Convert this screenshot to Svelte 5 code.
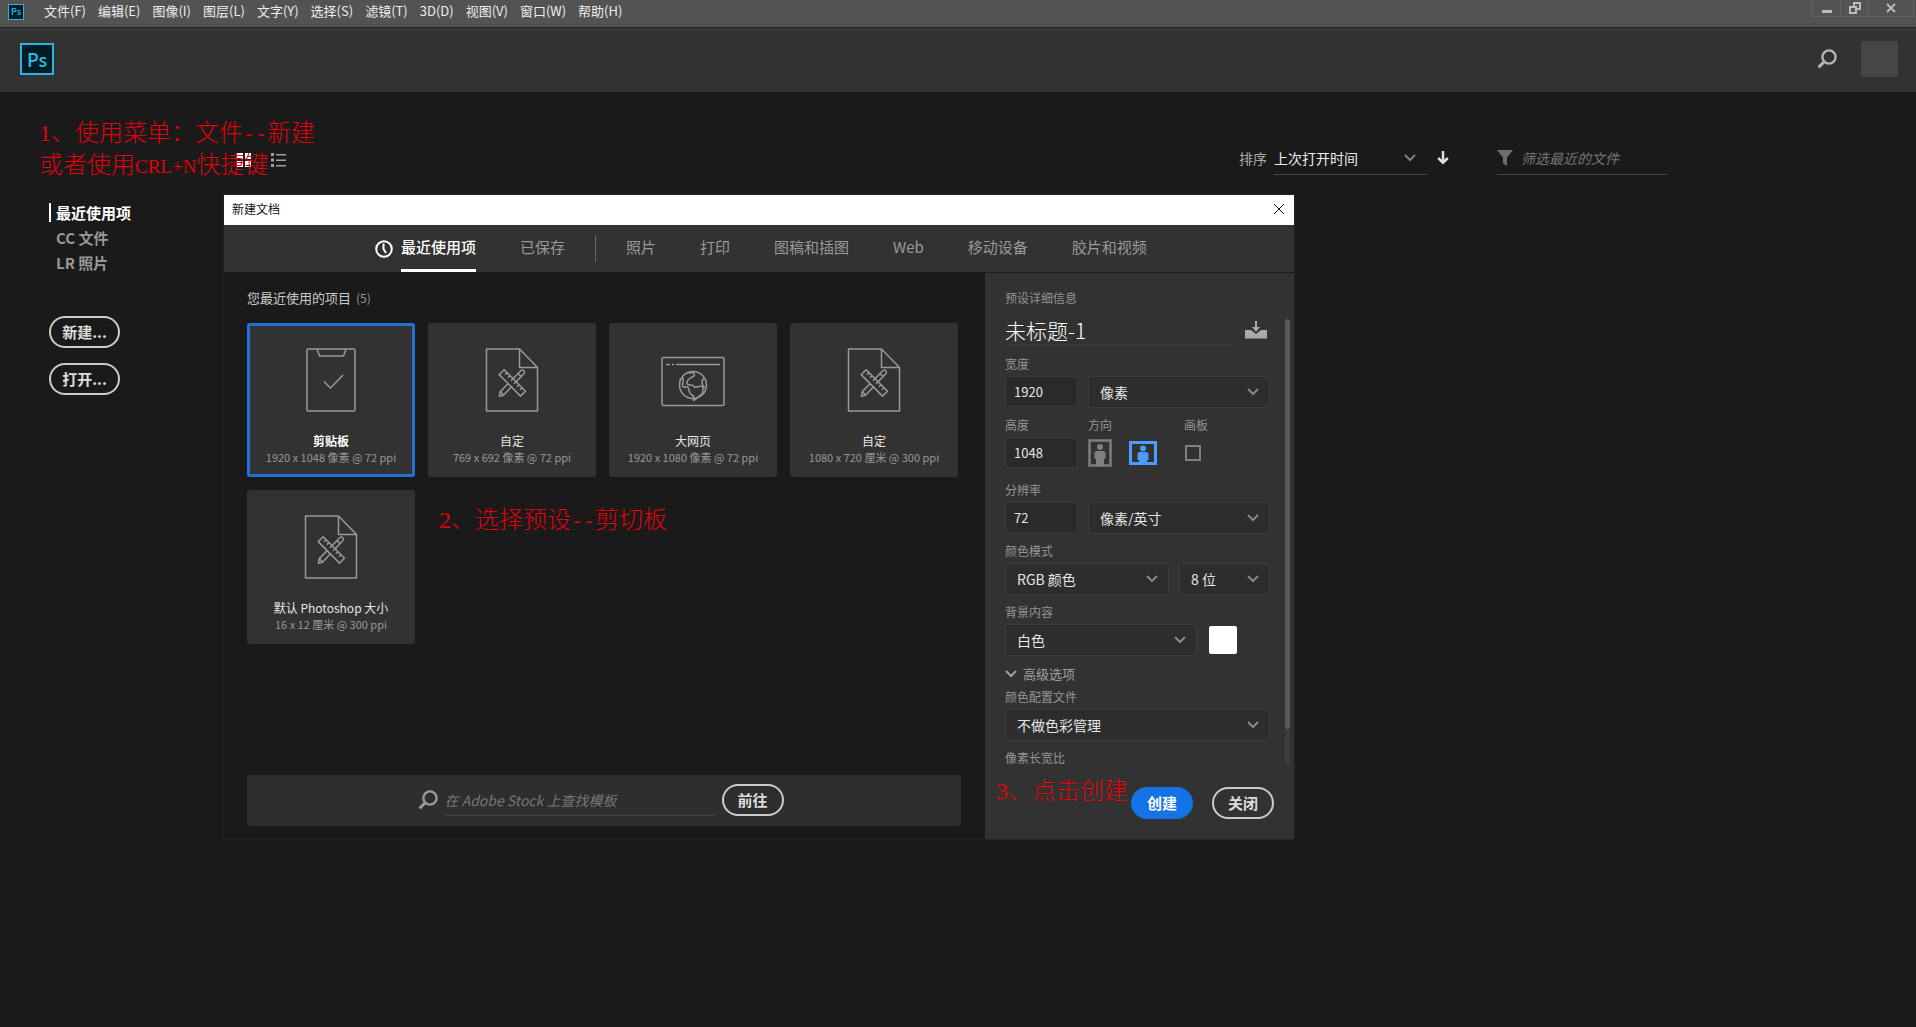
<script>
  let docName = $state('未标题-1');
  let selected = $state(0);
  let artboard = $state(false);
  let orientation = $state('landscape');

  const menus = ['文件(F)', '编辑(E)', '图像(I)', '图层(L)', '文字(Y)', '选择(S)', '滤镜(T)', '3D(D)', '视图(V)', '窗口(W)', '帮助(H)'];
  const tabs = ['照片', '打印', '图稿和插图', 'Web', '移动设备', '胶片和视频'];
  const presets = [
    { icon: 'clip', name: '剪贴板', size: '1920 x 1048 像素 @ 72 ppi' },
    { icon: 'doc', name: '自定', size: '769 x 692 像素 @ 72 ppi' },
    { icon: 'web', name: '大网页', size: '1920 x 1080 像素 @ 72 ppi' },
    { icon: 'doc', name: '自定', size: '1080 x 720 厘米 @ 300 ppi' },
    { icon: 'doc', name: '默认 Photoshop 大小', size: '16 x 12 厘米 @ 300 ppi' }
  ];
</script>

{#snippet magnifier()}
  <svg class="magnifier" viewBox="0 0 20 20" width="20" height="20" fill="none" stroke="currentColor">
    <circle cx="12" cy="8" r="6.600" stroke-width="2.400" />
    <path d="M7.200 12.800 1.600 18.400" stroke-width="3" />
  </svg>
{/snippet}

{#snippet pick(id, label, option, size)}
  <span class="pick {size}">
    <select {id} aria-label={label}><option>{option}</option></select>
    <svg viewBox="0 0 12 8" width="12" height="8" fill="none" stroke="currentColor" stroke-width="2"><path d="M1 1l5 5 5-5" /></svg>
  </span>
{/snippet}

<div class="app">
  <nav class="menubar">
    <span class="ps small">Ps</span>
    <div class="menus">
      {#each menus as m}<button>{m}</button>{/each}
    </div>
    <div class="window-controls">
      <button aria-label="最小化"><svg viewBox="0 0 12 12" width="12" height="12"><path d="M1 8h10v3H1z" fill="currentColor" /></svg></button>
      <button aria-label="还原"><svg viewBox="0 0 12 12" width="12" height="12" fill="none" stroke="currentColor" stroke-width="2"><path d="M1 5h6v6H1zM5 4V1h6v6H8" /></svg></button>
      <button class="wide" aria-label="关闭"><svg viewBox="0 0 12 12" width="12" height="12" fill="none" stroke="currentColor" stroke-width="2"><path d="M2 2l8 8M10 2l-8 8" /></svg></button>
    </div>
  </nav>

  <header class="topbar">
    <span class="ps">Ps</span>
    <button class="search" aria-label="搜索">{@render magnifier()}</button>
    <span class="avatar"></span>
  </header>

  <div class="workspace">
    <aside>
      <ul>
        <li><a class="current" href="#recent">最近使用项</a></li>
        <li><a href="#cc">CC 文件</a></li>
        <li><a href="#lr">LR 照片</a></li>
      </ul>
      <button class="pill">新建...</button>
      <button class="pill">打开...</button>
    </aside>

    <main>
      <div class="toolbar">
        <button class="view on" aria-label="网格视图">
          <svg viewBox="0 0 15 15" width="15" height="15" fill="currentColor"><path d="M0 0h6v6H0zM8 0h6v6H8zM0 8h6v6H0zM8 8h6v6H8z" /></svg>
        </button>
        <button class="view" aria-label="列表视图">
          <svg viewBox="0 0 15 15" width="15" height="15" fill="currentColor"><path d="M0 0h3v3H0zM0 5.500h3v3H0zM0 11h3v3H0zM5 1h10v1.500H5zM5 6.500h10V8H5zM5 12h10v1.500H5z" /></svg>
        </button>
        <label class="sort-label" for="sort">排序</label>
        <span class="sort">
          <select id="sort"><option>上次打开时间</option></select>
          <svg viewBox="0 0 12 8" width="12" height="8" fill="none" stroke="currentColor" stroke-width="2"><path d="M1 1l5 5 5-5" /></svg>
        </span>
        <button class="direction" aria-label="降序">
          <svg viewBox="0 0 12 14" width="12" height="14" fill="none" stroke="currentColor" stroke-width="2.500"><path d="M6 0v11M1.200 7 6 11.800 10.800 7" /></svg>
        </button>
        <div class="filter">
          <svg viewBox="0 0 16 16" width="16" height="16" fill="currentColor"><path d="M0 0h16L10 7.500V16L6 13.500v-6z" /></svg>
          <input aria-label="筛选" placeholder="筛选最近的文件" />
        </div>
      </div>

      <section class="dialog" role="dialog" aria-label="新建文档">
        <div class="titlebar">
          <h1>新建文档</h1>
          <button aria-label="关闭对话框"><svg viewBox="0 0 12 12" width="12" height="12" fill="none" stroke="currentColor"><path d="M1 1l10 10M11 1 1 11" /></svg></button>
        </div>

        <div class="tabs">
          <svg class="clock" viewBox="0 0 18 18" width="18" height="18" fill="none" stroke="currentColor" stroke-width="2"><circle cx="9" cy="9" r="7.800" /><path d="M8.500 3.500V9l2.500 4" /></svg>
          <button class="active">最近使用项</button>
          <button>已保存</button>
          <span class="rule"></span>
          {#each tabs as t}<button>{t}</button>{/each}
        </div>

        <div class="body">
          <div class="presets">
            <h2>您最近使用的项目 <span>(5)</span></h2>
            <div class="grid">
              {#each presets as p, i}
                <button class="card" class:chosen={selected === i} onclick={() => (selected = i)}>
                  <svg viewBox="0 0 64 64" width="64" height="64" fill="none" stroke="currentColor" stroke-width="1.500" stroke-linejoin="round">
                    {#if p.icon === 'clip'}
                      <rect x="8" y="1" width="48" height="62" rx="1" />
                      <path d="M18 1l2.500 7h24L47 1M25 33.500l6.500 6.500L44 27" />
                    {:else if p.icon === 'doc'}
                      <path d="M6.500 1h33l18 18.500V63h-51zM39.500 1v18.500h18" />
                      <path d="M23.500 47.200l-4.200 1 1-4.600L41 22.500q1.500-1 2.800.200t.2 2.800zM38 25.500l3 3M20.300 43.600l3.200 3.600" />
                      <path d="M24.200 21.700l21.300 21.600-5 4.800-21.300-21.500z" fill="#323232" />
                      <path d="M27 24.600l-2 2M30 27.600l-2 2M33 30.700l-2 2M36 33.700l-2 2M39 36.800l-2 2M42 39.800l-2 2" />
                    {:else}
                      <rect x="1" y="9.500" width="62" height="48" rx="1.500" />
                      <path d="M5 16.500h4M11 16.500h2M15 16.500h44" />
                      <circle cx="32" cy="37" r="13.500" />
                      <path d="M26.500 25q5-1 6.500.500t-1 3-4 2.500-2 3.500 3 2.500 4 1.500 5 0 4 3-1.500 5-5 4-3 .500-1.500-4-3-5-4-3-2-5-3.500-2M43.500 30q-2.500 1-2.500 4.500t3 5.500" />
                    {/if}
                  </svg>
                  <strong>{p.name}</strong>
                  <small>{p.size}</small>
                </button>
              {/each}
            </div>
            <form class="stock" onsubmit={(e) => e.preventDefault()}>
              {@render magnifier()}
              <input aria-label="查找模板" placeholder="在 Adobe Stock 上查找模板" />
              <button class="pill">前往</button>
            </form>
          </div>

          <div class="details">
            <div class="scroll">
              <div class="fields">
                <span class="caption">预设详细信息</span>
                <div class="row name">
                  <input aria-label="文档名称" bind:value={docName} />
                  <button aria-label="保存预设">
                    <svg viewBox="0 0 22 18" width="22" height="18" fill="currentColor"><path d="M0 9h6l5 4 5-4h6v8.500H0z" /><path d="M10 0h2v6h3l-4 5-4-5h3z" /></svg>
                  </button>
                </div>
                <label for="w">宽度</label>
                <div class="row">
                  <input id="w" class="num" value="1920" />
                  {@render pick('unit', '单位', '像素', '')}
                </div>
                <div class="row labels"><label for="h">高度</label><span class="orient-label">方向</span><label for="ab">画板</label></div>
                <div class="row">
                  <input id="h" class="num" value="1048" />
                  <div class="orient">
                    <button class:on={orientation === 'portrait'} aria-label="纵向" onclick={() => (orientation = 'portrait')}>
                      <svg viewBox="0 0 24 28" width="24" height="28" fill="currentColor"><path d="M1.500 1.500h21v25h-21z" fill="none" stroke="currentColor" stroke-width="2.400" /><circle cx="12" cy="8" r="3" /><path d="M6.500 14q0-2 2-2h7q2 0 2 2v6h-1.500v6H8v-6H6.500z" /></svg>
                    </button>
                    <button class:on={orientation === 'landscape'} aria-label="横向" onclick={() => (orientation = 'landscape')}>
                      <svg viewBox="0 0 28 24" width="28" height="24" fill="currentColor"><path d="M1.500 1.500h25v21h-25z" fill="none" stroke="currentColor" stroke-width="3" /><circle cx="14" cy="7.500" r="3" /><path d="M8.500 13q0-2 2-2h7q2 0 2 2v6H18v4h-8v-4H8.500z" /></svg>
                    </button>
                  </div>
                  <input id="ab" type="checkbox" bind:checked={artboard} />
                </div>
                <label class="spaced" for="res">分辨率</label>
                <div class="row">
                  <input id="res" class="num" value="72" />
                  {@render pick('resunit', '分辨率单位', '像素/英寸', '')}
                </div>
                <label for="mode">颜色模式</label>
                <div class="row">
                  {@render pick('mode', '颜色模式', 'RGB 颜色', '')}
                  {@render pick('depth', '位深度', '8 位', 'short')}
                </div>
                <label for="bg">背景内容</label>
                <div class="row">
                  {@render pick('bg', '背景内容', '白色', 'medium')}
                  <button class="swatch" aria-label="背景颜色"></button>
                </div>
                <button class="advanced">
                  <svg viewBox="0 0 12 8" width="12" height="8" fill="none" stroke="currentColor" stroke-width="2"><path d="M1 1l5 5 5-5" /></svg>高级选项
                </button>
                <label class="tight" for="profile">颜色配置文件</label>
                <div class="row">{@render pick('profile', '颜色配置文件', '不做色彩管理', '')}</div>
                <span class="label">像素长宽比</span>
              </div>
              <div class="track"><div class="thumb"></div></div>
            </div>
            <div class="actions">
              <button class="pill primary">创建</button>
              <button class="pill">关闭</button>
            </div>
          </div>
        </div>
      </section>
    </main>
  </div>

  <div class="note one">
    <p><i>1</i>、使用菜单：文件<i class="dash">--</i>新建</p>
    <p>或者使用<i class="caps">CRL+N</i>快捷键</p>
  </div>
  <div class="note two"><p><i>2</i>、选择预设<i class="dash">--</i>剪切板</p></div>
  <div class="note three"><p><i>3</i>、点击创建</p></div>
</div>

<style>
  :global(body) { margin: 0; background: #1a1a1a; }
  .app {
    position: relative;
    min-height: 100vh;
    background: #1a1a1a;
    color: #ccc;
    font: 12px/16px "Noto Sans CJK SC", sans-serif;
  }
  .app :global(*) { box-sizing: border-box; }
  button, input, select { font: inherit; color: inherit; border: 0; padding: 0; margin: 0; background: none; border-radius: 0; outline: 0; }
  select { appearance: none; }
  svg { display: block; flex: none; }
  h1, h2, p, ul { margin: 0; padding: 0; }
  h1, h2 { font-weight: 400; }
  li { list-style: none; }
  a { color: inherit; text-decoration: none; }

  .menubar { display: flex; align-items: flex-start; height: 28px; background: #535353; border-bottom: 1px solid #222; padding: 0 2px 0 8px; }
  .ps { display: grid; place-items: center; width: 34px; height: 32px; border: 2px solid #2bb5e0; background: #001d26; color: #2bc0ee; font-size: 18px; font-weight: 500; line-height: 26px; }
  .ps.small { width: 16px; height: 16px; margin-top: 4px; border-width: 1px; font-size: 9px; line-height: 12px; }
  .menus { display: flex; gap: 12px; margin-left: 20px; flex: 1; }
  .menus button { font-size: 13px; line-height: 22px; color: #eee; white-space: nowrap; }
  .window-controls { display: flex; border: 1px solid #626262; border-top: 0; color: #bbb; }
  .window-controls button { display: grid; place-items: center; width: 28px; height: 16px; border-right: 1px solid #626262; }
  .window-controls .wide { width: 44px; border: 0; }

  .topbar { display: flex; align-items: center; height: 64px; padding: 0 18px 5px 20px; background: #323232; border-top: 3px solid #383838; }
  .search { margin-left: auto; color: #b4b4b4; }
  .avatar { width: 37px; height: 36px; margin-left: 24px; border-radius: 2px; background: #464646; }

  .workspace { display: flex; }
  aside { width: 224px; flex: none; padding: 111px 0 0 49px; }
  aside li { height: 25px; font-size: 15px; line-height: 25px; font-weight: 700; color: #999; }
  aside a { display: block; padding-left: 5px; border-left: 2px solid transparent; line-height: 19px; }
  aside .current { color: #fff; border-color: #fff; }
  aside ul { margin-bottom: 38px; }
  .pill { display: block; min-width: 62px; height: 32px; border: 2px solid #ccc; border-radius: 16px; color: #ddd; font-size: 15px; font-weight: 700; line-height: 26px; }
  aside .pill { width: 71px; margin-bottom: 15px; }

  main { flex: 1; min-width: 0; }
  .toolbar { display: flex; align-items: center; height: 103px; padding: 29px 249px 0 13px; font-size: 14px; }
  .view { color: #a0a0a0; margin: 4px 19px 0 0; }
  .view.on { color: #fff; }
  .sort-label { margin-left: auto; margin-right: 7px; color: #aaa; }
  .sort { display: flex; align-items: center; width: 153px; height: 34px; padding-right: 11px; border-bottom: 1px solid #464646; color: #808080; }
  .sort select { flex: 1; color: #eee; }
  .direction { margin-left: 10px; color: #e0e0e0; }
  .filter { display: flex; align-items: center; width: 170px; height: 34px; margin-left: 48px; border-bottom: 1px solid #464646; color: #6e6e6e; }
  .filter input { width: 140px; margin-left: 8px; }
  input::placeholder { color: #777; font-style: italic; opacity: 1; }

  .dialog { width: 1070px; max-width: 100%; background: #1a1a1a; box-shadow: 0 0 0 1px #242424; }
  .titlebar { display: flex; align-items: center; justify-content: space-between; height: 30px; padding: 0 9px 2px 8px; background: #fff; color: #111; }
  h1 { font-size: 12px; }
  .tabs { display: flex; align-items: center; height: 47px; padding-left: 151px; background: #323232; color: #999; font-size: 15px; }
  .tabs button { height: 47px; margin-right: 44px; line-height: 44px; border-bottom: 3px solid transparent; white-space: nowrap; }
  .tabs .active { color: #fff; border-color: #fff; font-weight: 500; }
  .clock { color: #fff; margin-right: 8px; }
  .rule { width: 1px; height: 27px; margin: 0 30px 0 -14px; background: #666; }

  .body { display: flex; height: 567px; }
  .presets { flex: 1; display: flex; flex-direction: column; padding: 17px 24px 13px 23px; }
  h2 { font-size: 13px; line-height: 18px; }
  h2 span { margin-left: 2px; font-size: 12px; color: #999; }
  .grid { display: grid; grid-template-columns: repeat(4, 168px); gap: 13px; margin-top: 16px; }
  .card { display: flex; flex-direction: column; align-items: center; height: 154px; padding: 25px 0 0; border-radius: 3px; background: #323232; color: #999; }
  .card svg { margin-bottom: 21px; }
  .card strong { font-weight: 400; color: #e6e6e6; }
  .card.chosen strong { color: #fff; font-weight: 700; }
  .card small { font-size: 11px; }
  .chosen { box-shadow: inset 0 0 0 3px #1f73d8; }
  .stock { display: flex; align-items: center; justify-content: center; height: 51px; margin-top: auto; padding: 0 7px 1px 0; border-radius: 2px; background: #2e2e2e; color: #999; }
  .stock input { width: 270px; height: 32px; margin: 0 7px 0 7px; border-bottom: 1px solid #444; font-size: 14px; }

  .details { width: 309px; flex: none; border-top: 1px solid #1c1c1c; background: #323232; }
  .scroll { display: flex; justify-content: space-between; padding: 16px 4px 0 20px; }
  .fields { width: 265px; }
  .fields label, .caption, .label { display: block; color: #959595; line-height: 18px; }
  .row { display: flex; align-items: center; gap: 10px; height: 31px; margin: 3px 0 9px; }
  .name { height: 32px; margin: 7px 0 9px; justify-content: space-between; }
  .name input { width: 228px; height: 32px; border-bottom: 1px solid #404040; color: #fff; font-size: 21px; font-weight: 300; }
  .name button { margin-right: 3px; color: #aaa; }
  .num { width: 73px; height: 31px; padding-left: 8px; border: 1px solid #3a3a3a; border-radius: 2px; background: #2a2a2a; color: #e6e6e6; font-size: 13px; }
  .pick { display: flex; align-items: center; flex: 1; height: 32px; padding: 0 10px 0 11px; border: 1px solid #3c3c3c; border-radius: 2px; background: #2d2d2d; color: #888; }
  .pick select { flex: 1; min-width: 0; color: #e6e6e6; font-size: 14px; }
  .pick.short { flex: 0 0 91px; }
  .pick.medium { flex: 0 0 192px; }
  .labels { height: 18px; margin: 0; gap: 0; }
  .labels label:first-child { width: 83px; }
  .orient-label { width: 96px; color: #959595; }
  .orient { display: flex; align-items: center; gap: 17px; width: 87px; color: #808080; }
  .orient .on { color: #4a9cff; }
  input[type="checkbox"] { appearance: none; width: 16px; height: 16px; border: 2px solid #808080; }
  input[type="checkbox"]:checked { background: #4a9cff; }
  .fields .spaced { margin-top: 13px; }
  .swatch { width: 28px; height: 28px; margin-left: 2px; border-radius: 2px; background: #fff; }
  .advanced { display: flex; align-items: center; gap: 6px; height: 20px; color: #a0a0a0; font-size: 13px; }
  .fields .tight { margin-top: 4px; }
  .track { width: 5px; margin: 30px 0 0; height: 446px; border-radius: 3px; background: #3c3c3c; }
  .thumb { height: 410px; border-radius: 3px; background: #595959; }
  .actions { display: flex; justify-content: flex-end; gap: 19px; padding: 20px 20px 0 0; }
  .primary { border-color: #1473e6; background: #1473e6; color: #fff; }

  .note { position: absolute; color: #e0000c; font-size: 24px; font-weight: 300; line-height: 30px; white-space: nowrap; pointer-events: none; }
  .note i { font: 24px/24px "Liberation Serif", serif; }
  .note .dash { font: 20px/24px "Liberation Mono", monospace; }
  .note .caps { font-size: 19px; }
  .one { left: 39px; top: 116px; }
  .two { left: 439px; top: 503px; }
  .three { left: 996px; top: 774px; }
</style>
